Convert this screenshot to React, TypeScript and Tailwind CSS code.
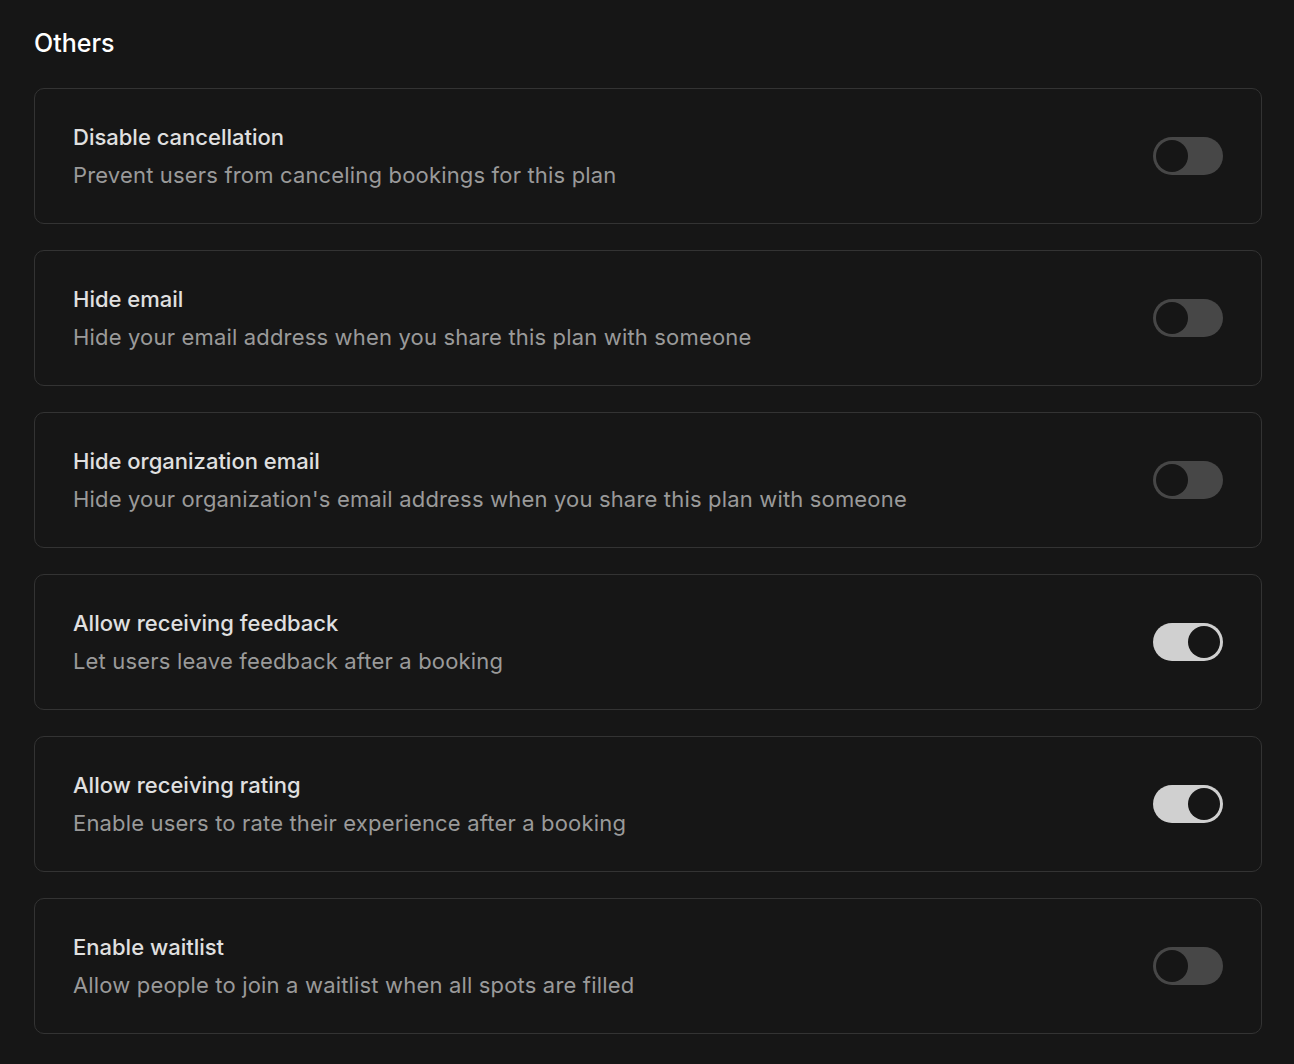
import { useState } from "react";

type Setting = {
  id: string;
  title: string;
  description: string;
  enabled: boolean;
};

const initialSettings: Setting[] = [
  {
    id: "disable-cancellation",
    title: "Disable cancellation",
    description: "Prevent users from canceling bookings for this plan",
    enabled: false,
  },
  {
    id: "hide-email",
    title: "Hide email",
    description: "Hide your email address when you share this plan with someone",
    enabled: false,
  },
  {
    id: "hide-org-email",
    title: "Hide organization email",
    description: "Hide your organization's email address when you share this plan with someone",
    enabled: false,
  },
  {
    id: "feedback",
    title: "Allow receiving feedback",
    description: "Let users leave feedback after a booking",
    enabled: true,
  },
  {
    id: "rating",
    title: "Allow receiving rating",
    description: "Enable users to rate their experience after a booking",
    enabled: true,
  },
  {
    id: "waitlist",
    title: "Enable waitlist",
    description: "Allow people to join a waitlist when all spots are filled",
    enabled: false,
  },
];

function Toggle({ checked, onChange }: { checked: boolean; onChange: () => void }) {
  return (
    <button
      type="button"
      role="switch"
      aria-checked={checked}
      onClick={onChange}
      className={
        "flex h-[38px] w-[70px] shrink-0 items-center rounded-full p-[3px] transition " +
        (checked ? "justify-end bg-[#d0d0d0]" : "justify-start bg-[#474747]")
      }
    >
      <span className="block h-[32px] w-[32px] rounded-full bg-[#161616]" />
    </button>
  );
}

export default function App() {
  const [settings, setSettings] = useState(initialSettings);

  const toggle = (id: string) =>
    setSettings((prev) => prev.map((s) => (s.id === id ? { ...s, enabled: !s.enabled } : s)));

  return (
    <div className="min-h-[1064px] bg-[#161616] pl-[34px] pr-[32px] pt-[26px] pb-[30px] font-['Inter',sans-serif]">
      <h2 className="text-[25px] leading-[34px] font-medium text-white">Others</h2>

      <div className="mt-[28px] flex flex-col gap-[26px]">
        {settings.map((s) => (
          <div
            key={s.id}
            className="flex items-center justify-between rounded-[10px] border border-[#333333] py-[34px] pl-[38px] pr-[38px]"
          >
            <div className="flex flex-col gap-[10px]">
              <div className="text-[22px] leading-[28px] font-medium text-[#e0e0e0]">{s.title}</div>
              <div className="text-[22px] leading-[28px] tracking-[0.17px] text-[#9a9a9a]">
                {s.description}
              </div>
            </div>
            <Toggle checked={s.enabled} onChange={() => toggle(s.id)} />
          </div>
        ))}
      </div>
    </div>
  );
}
